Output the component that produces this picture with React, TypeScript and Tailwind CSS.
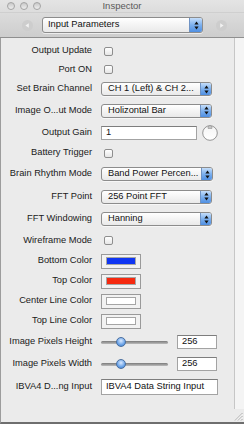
import React from "react";

const Arrows = () => (
  <svg width="5" height="9" viewBox="0 0 5 9">
    <path d="M2.5 0.5 L4.6 3.4 L0.4 3.4 Z" fill="#111" />
    <path d="M2.5 8.5 L4.6 5.6 L0.4 5.6 Z" fill="#111" />
  </svg>
);

const Popup = ({ w, text, big }: { w: string; text: string; big?: boolean }) => (
  <div
    className={`${w} ${big ? "h-[16px]" : "h-[14px]"} flex items-stretch rounded-[3px] border border-[#8c8c8c] bg-gradient-to-b from-white to-[#e9e9e9] shadow-[0_1px_0_rgba(255,255,255,0.6)] overflow-hidden`}
  >
    <div className={`flex-1 flex items-center ${big ? "pl-[5px]" : "pl-[6px]"} text-[#111] whitespace-nowrap overflow-hidden`}>
      {text}
    </div>
    <div
      className={`${big ? "w-[13px]" : "w-[11px]"} flex items-center justify-center border-l border-[#6f93c4] bg-gradient-to-b from-[#c5defa] via-[#7cb0ee] to-[#4f8fe2]`}
    >
      <Arrows />
    </div>
  </div>
);

const Check = () => (
  <div className="ml-[3px] w-[9px] h-[9px] rounded-[2px] border border-[#8e8e8e] bg-gradient-to-b from-white to-[#e6e6e6]" />
);

const Field = ({ w, h, text }: { w: string; h: string; text: string }) => (
  <div
    className={`${w} ${h} flex items-center pl-[4px] bg-white border border-[#a3a3a3] border-t-[#7d7d7d] text-[#111] whitespace-nowrap overflow-hidden`}
  >
    {text}
  </div>
);

const ColorWell = ({ c }: { c: string }) => (
  <div className="w-[40px] h-[15px] border border-[#9a9a9a] bg-[#f2f2f2] flex items-center px-[4px]">
    <div className={`w-full h-[8px] border border-[#a5a5a5] ${c}`} />
  </div>
);

const Slider = () => (
  <div className="relative w-[67px] h-[12px] flex items-center">
    <div className="w-full h-[3px] rounded-full bg-gradient-to-b from-[#7a7a7a] to-[#bdbdbd]" />
    <div className="absolute left-[15px] top-[1px] w-[10px] h-[10px] rounded-full border border-[#4a6f9f] bg-[radial-gradient(circle_at_50%_35%,#dbeaff,#6aa3e8_60%,#3a78c8)]" />
  </div>
);

const Dial = () => (
  <svg width="16" height="16" viewBox="0 0 16 16" className="ml-[5px]">
    <defs>
      <linearGradient id="dg" x1="0" y1="0" x2="0" y2="1">
        <stop offset="0" stopColor="#f4f4f4" />
        <stop offset="1" stopColor="#ffffff" />
      </linearGradient>
    </defs>
    <circle cx="8" cy="8" r="7.3" fill="url(#dg)" stroke="#8a8a8a" strokeWidth="0.9" />
    <path d="M6 2.6 A2 2 0 0 1 10 2.6 L10 3.4 L6 3.4 Z" fill="#c9c9c9" stroke="#8a8a8a" strokeWidth="0.6" />
  </svg>
);

const Row = ({ h, label, children }: { h: string; label: string; children?: React.ReactNode }) => (
  <div className={`${h} flex items-center`}>
    <div className="w-[91px] text-right whitespace-nowrap text-[#1a1a1a]">{label}</div>
    <div className="ml-[9px] flex items-center">{children}</div>
  </div>
);

const NavCircle = ({ left }: { left?: boolean }) => (
  <svg width="11" height="11" viewBox="0 0 11 11">
    <circle cx="5.5" cy="5.5" r="5.5" fill="#cdcdcd" />
    {left ? (
      <path d="M3.4 5.5 L6.8 3.3 L6.8 7.7 Z" fill="#f2f2f2" />
    ) : (
      <path d="M7.6 5.5 L4.2 3.3 L4.2 7.7 Z" fill="#f2f2f2" />
    )}
  </svg>
);

export default function App() {
  return (
    <div className="w-[244px] h-[424px] overflow-hidden flex flex-col font-['Liberation_Sans',Arial,sans-serif] text-[9.3px] leading-none bg-[#ececec]">
      {/* title + toolbar */}
      <div className="bg-gradient-to-b from-[#e4e4e4] to-[#cdcdcd] border-b border-[#8f8f8f]">
        <div className="h-[13px] relative flex items-center justify-center border-b border-[#cfcfcf]">
          <div className="absolute left-[7px] top-[2px] flex gap-[5px]">
            <div className="w-[8px] h-[8px] rounded-full border border-[#a4a4a4] bg-gradient-to-b from-[#c9c9c9] to-[#eeeeee]" />
            <div className="w-[8px] h-[8px] rounded-full border border-[#a4a4a4] bg-gradient-to-b from-[#c9c9c9] to-[#eeeeee]" />
            <div className="w-[8px] h-[8px] rounded-full border border-[#a4a4a4] bg-gradient-to-b from-[#c9c9c9] to-[#eeeeee]" />
          </div>
          <span className="text-[#5a5a5a] text-[9.5px]">Inspector</span>
        </div>
        <div className="h-[24px] flex items-center">
          <div className="ml-[22px]">
            <NavCircle left />
          </div>
          <div className="ml-[9px]">
            <Popup w="w-[161px]" text="Input Parameters" big />
          </div>
          <div className="ml-[13px]">
            <NavCircle />
          </div>
        </div>
      </div>

      {/* content */}
      <div className="flex-1 flex">
        <div className="w-[235px] border-l border-[#9c9c9c] border-r border-r-[#c6c6c6] bg-[#ebebeb] pt-[4px]">
          <Row h="h-[18px]" label="Output Update">
            <Check />
          </Row>
          <Row h="h-[19px]" label="Port ON">
            <Check />
          </Row>
          <Row h="h-[20px]" label="Set Brain Channel">
            <Popup w="w-[111px]" text="CH 1 (Left) & CH 2..." />
          </Row>
          <Row h="h-[23px]" label="Image O...ut Mode">
            <Popup w="w-[111px]" text="Holizontal Bar" />
          </Row>
          <Row h="h-[21px]" label="Output Gain">
            <Field w="w-[96px]" h="h-[14px]" text="1" />
            <Dial />
          </Row>
          <Row h="h-[20px]" label="Battery Trigger">
            <Check />
          </Row>
          <Row h="h-[22px]" label="Brain Rhythm Mode">
            <Popup w="w-[112px]" text="Band Power Percen..." />
          </Row>
          <Row h="h-[23px]" label="FFT Point">
            <Popup w="w-[111px]" text="256 Point FFT" />
          </Row>
          <Row h="h-[22px]" label="FFT Windowing">
            <Popup w="w-[111px]" text="Hanning" />
          </Row>
          <Row h="h-[21px]" label="Wireframe Mode">
            <Check />
          </Row>
          <Row h="h-[20px]" label="Bottom Color">
            <ColorWell c="bg-[#0f35f2]" />
          </Row>
          <Row h="h-[20px]" label="Top Color">
            <ColorWell c="bg-[#f5290f]" />
          </Row>
          <Row h="h-[20px]" label="Center Line Color">
            <ColorWell c="bg-white" />
          </Row>
          <Row h="h-[20px]" label="Top Line Color">
            <ColorWell c="bg-white" />
          </Row>
          <Row h="h-[22px]" label="Image Pixels Height">
            <Slider />
            <div className="ml-[9px]">
              <Field w="w-[40px]" h="h-[14px]" text="256" />
            </div>
          </Row>
          <Row h="h-[22px]" label="Image Pixels Width">
            <Slider />
            <div className="ml-[9px]">
              <Field w="w-[40px]" h="h-[14px]" text="256" />
            </div>
          </Row>
          <Row h="h-[24px]" label="IBVA4 D...ng Input">
            <Field w="w-[117px]" h="h-[16px]" text="IBVA4 Data String Input" />
          </Row>
        </div>
        <div className="flex-1 bg-[#f4f4f4]" />
      </div>

      {/* bottom bar */}
      <div className="h-[15px] bg-[#ebebeb] border-l border-[#9c9c9c] border-b-[2px] border-b-[#6e6e6e] flex justify-end items-end">
        <svg width="9" height="9" viewBox="0 0 9 9" className="mr-[1px] mb-[1px]">
          <path d="M8.5 1 L1 8.5 M8.5 4 L4 8.5 M8.5 7 L7 8.5" stroke="#9a9a9a" strokeWidth="0.8" />
          <path d="M8.5 2 L2 8.5 M8.5 5 L5 8.5" stroke="#ffffff" strokeWidth="0.6" />
        </svg>
      </div>
    </div>
  );
}
